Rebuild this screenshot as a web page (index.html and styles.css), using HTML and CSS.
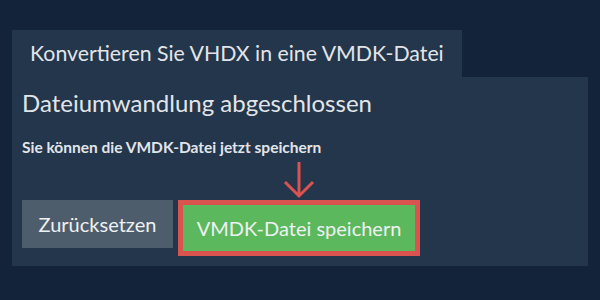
FILE: index.html
```html
<!DOCTYPE html>
<html lang="de">
<head>
<meta charset="utf-8">
<link rel="stylesheet" href="styles.css">
</head>
<body>
<div class="wrap">
  <div class="tab">Konvertieren Sie VHDX in eine VMDK-Datei</div>
  <div class="panel">
    <h2 class="title">Dateiumwandlung abgeschlossen</h2>
    <p class="note">Sie können die VMDK-Datei jetzt speichern</p>
    <div class="actions">
      <button class="btn btn-reset">Zurücksetzen</button>
      <div class="save-wrap">
        <svg class="arrow" width="32" height="38" viewBox="0 0 32 38">
          <path d="M16 1 V34 M2 21 L16 35 L30 21" fill="none" stroke="#d9534f" stroke-width="3"/>
        </svg>
        <button class="btn btn-save">VMDK-Datei speichern</button>
      </div>
    </div>
  </div>
</div>
</body>
</html>
```
FILE: styles.css
```css
html, body {
  margin: 0;
  padding: 0;
}
body {
  background: #12233a;
  font-family: Lato, "Open Sans", sans-serif;
  color: #e1e5ea;
  width: 600px;
  height: 300px;
  overflow: hidden;
}
.wrap {
  padding: 30px 12px 0;
}
.tab {
  display: inline-block;
  background: #23364b;
  height: 47px;
  line-height: 47px;
  padding: 0 18px;
  font-size: 21.3px;
  box-sizing: border-box;
}
.panel {
  background: #23364b;
  height: 189px;
  box-sizing: border-box;
  padding: 12px 10px 0;
}
.title {
  margin: 0;
  font-weight: 400;
  font-size: 24px;
  line-height: 28px;
}
.note {
  margin: 21px 0 0;
  font-weight: 700;
  font-size: 15.5px;
  line-height: 18px;
}
.actions {
  display: flex;
  align-items: flex-start;
  gap: 5px;
  margin-top: 44px;
}
.btn {
  font-family: inherit;
  color: #eef1f3;
  border: 0;
  margin: 0;
  font-size: 20px;
  cursor: pointer;
}
.btn-reset {
  background: #4e5d6c;
  width: 151px;
  height: 48px;
  padding: 0;
}
.save-wrap {
  position: relative;
}
.arrow {
  position: absolute;
  left: 105px;
  top: -39px;
}
.btn-save {
  background: #5cb85c;
  border: 5px solid #d9534f;
  width: 242px;
  height: 56px;
  padding: 0;
  display: block;
}
```
